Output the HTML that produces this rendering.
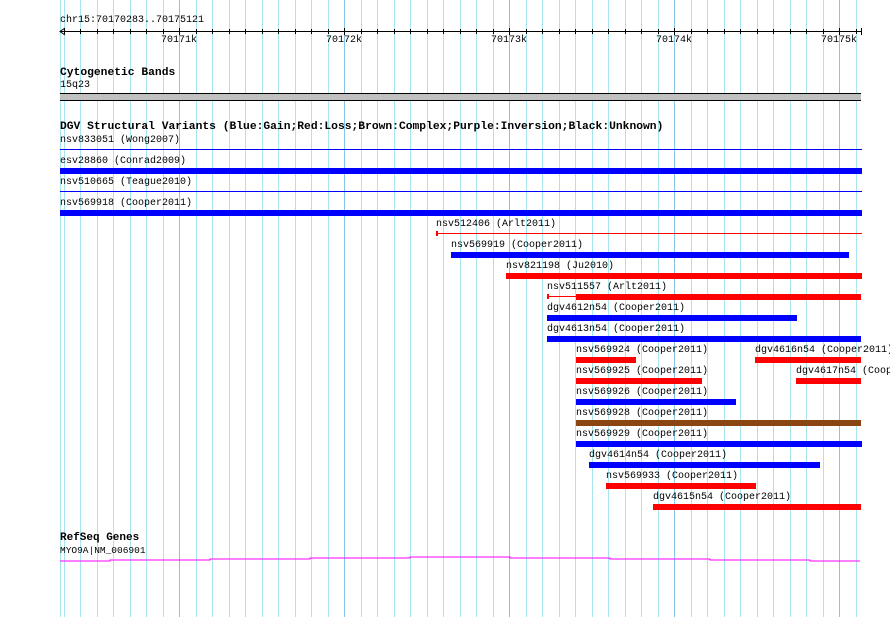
<!DOCTYPE html>
<html><head><meta charset="utf-8"><style>
body{margin:0;width:890px;height:617px;background:#fff;position:relative;overflow:hidden;font-family:"Liberation Mono","DejaVu Sans Mono",monospace;}
.g{position:absolute;top:0;height:617px;width:1px;background:#a8e6ee}
.G{position:absolute;top:0;height:617px;width:1px;background:#88c4e4}
.t{position:absolute;font-size:10px;line-height:10px;color:#000;white-space:nowrap}
.h{position:absolute;font-size:11.3px;line-height:11px;font-weight:bold;color:#000;white-space:nowrap}
.b{position:absolute;height:6px}
.l{position:absolute;height:1px}
.bl{background:#0000ff}.rd{background:#ff0000}.br{background:#8b4513}
.tk{position:absolute;width:1px;background:#000}
</style></head><body>
<div id="grid"></div>
<script>
var s='';
for(var i=0;i<49;i++){var x=Math.round(63.5+16.5*i);if(x>860)break;var maj=((i-7)%10===0);s+='<div class="'+(maj?'G':'g')+'" style="left:'+x+'px"></div>';}
s+='<div class="g" style="left:60px"></div>';
for(var i=0;i<49;i++){var x=Math.round(63.5+16.5*i);if(x>860)break;var maj=((i-7)%10===0);s+='<div class="tk" style="left:'+x+'px;top:'+(maj?28:29)+'px;height:'+(maj?7:5)+'px"></div>';}
document.getElementById('grid').innerHTML=s;
</script>
<div class="t" style="left:60px;top:16px">chr15:70170283..70175121</div>
<div class="l" style="left:60px;top:31px;width:801px;background:#000"></div>
<div class="tk" style="left:861px;top:28px;height:7px"></div>
<svg style="position:absolute;left:59px;top:27px" width="8" height="9"><path d="M6 1 L1 4.5 L6 8" fill="none" stroke="#000" stroke-width="1"/></svg>
<div class="t" style="left:161px;top:36px">70171k</div>
<div class="t" style="left:326px;top:36px">70172k</div>
<div class="t" style="left:491px;top:36px">70173k</div>
<div class="t" style="left:656px;top:36px">70174k</div>
<div class="t" style="left:821px;top:36px">70175k</div>

<div class="h" style="left:60px;top:68px">Cytogenetic Bands</div>
<div class="t" style="left:60px;top:81px">15q23</div>
<div style="position:absolute;left:60px;top:93px;width:801px;height:6px;background:#c0c0c0;border-top:1px solid #000;border-bottom:1px solid #000"></div>

<div class="h" style="left:60px;top:122px">DGV Structural Variants (Blue:Gain;Red:Loss;Brown:Complex;Purple:Inversion;Black:Unknown)</div>

<div class="t" style="left:60px;top:136px">nsv833051 (Wong2007)</div>
<div class="l bl" style="left:60px;top:149px;width:802px"></div>
<div class="t" style="left:60px;top:157px">esv28860 (Conrad2009)</div>
<div class="b bl" style="left:60px;top:168px;width:802px"></div>
<div class="t" style="left:60px;top:178px">nsv510665 (Teague2010)</div>
<div class="l bl" style="left:60px;top:191px;width:802px"></div>
<div class="t" style="left:60px;top:199px">nsv569918 (Cooper2011)</div>
<div class="b bl" style="left:60px;top:210px;width:802px"></div>

<div class="t" style="left:436px;top:220px">nsv512406 (Arlt2011)</div>
<div class="l rd" style="left:436px;top:233px;width:426px"></div>
<div class="tk" style="left:436px;top:231px;height:5px;width:2px;background:#f00"></div>

<div class="t" style="left:451px;top:241px">nsv569919 (Cooper2011)</div>
<div class="b bl" style="left:451px;top:252px;width:398px"></div>
<div class="t" style="left:506px;top:262px">nsv821198 (Ju2010)</div>
<div class="b rd" style="left:506px;top:273px;width:356px"></div>
<div class="t" style="left:547px;top:283px">nsv511557 (Arlt2011)</div>
<div class="l rd" style="left:547px;top:296px;width:30px"></div>
<div class="tk" style="left:547px;top:294px;height:5px;width:2px;background:#f00"></div>
<div class="b rd" style="left:576px;top:294px;width:285px"></div>
<div class="t" style="left:547px;top:304px">dgv4612n54 (Cooper2011)</div>
<div class="b bl" style="left:547px;top:315px;width:250px"></div>
<div class="t" style="left:547px;top:325px">dgv4613n54 (Cooper2011)</div>
<div class="b bl" style="left:547px;top:336px;width:314px"></div>
<div class="t" style="left:576px;top:346px">nsv569924 (Cooper2011)</div>
<div class="b rd" style="left:576px;top:357px;width:60px"></div>
<div class="t" style="left:755px;top:346px">dgv4616n54 (Cooper2011)</div>
<div class="b rd" style="left:755px;top:357px;width:106px"></div>
<div class="t" style="left:576px;top:367px">nsv569925 (Cooper2011)</div>
<div class="b rd" style="left:576px;top:378px;width:126px"></div>
<div class="t" style="left:796px;top:367px">dgv4617n54 (Cooper2011)</div>
<div class="b rd" style="left:796px;top:378px;width:65px"></div>
<div class="t" style="left:576px;top:388px">nsv569926 (Cooper2011)</div>
<div class="b bl" style="left:576px;top:399px;width:160px"></div>
<div class="t" style="left:576px;top:409px">nsv569928 (Cooper2011)</div>
<div class="b br" style="left:576px;top:420px;width:285px"></div>
<div class="t" style="left:576px;top:430px">nsv569929 (Cooper2011)</div>
<div class="b bl" style="left:576px;top:441px;width:286px"></div>
<div class="t" style="left:589px;top:451px">dgv4614n54 (Cooper2011)</div>
<div class="b bl" style="left:589px;top:462px;width:231px"></div>
<div class="t" style="left:606px;top:472px">nsv569933 (Cooper2011)</div>
<div class="b rd" style="left:606px;top:483px;width:150px"></div>
<div class="t" style="left:653px;top:493px">dgv4615n54 (Cooper2011)</div>
<div class="b rd" style="left:653px;top:504px;width:208px"></div>

<div class="h" style="left:60px;top:533px;font-size:11px">RefSeq Genes</div>
<div class="t" style="left:60px;top:546px;font-size:9.5px">MYO9A|NM_006901</div>
<svg style="position:absolute;left:0;top:550px" width="890" height="20"><path d="M60 11H110V10H210V9H310V8H410V7H510V8H610V9H710V10H810V11H860" fill="none" stroke="#ff00ff" stroke-width="1"/></svg>
</body></html>
